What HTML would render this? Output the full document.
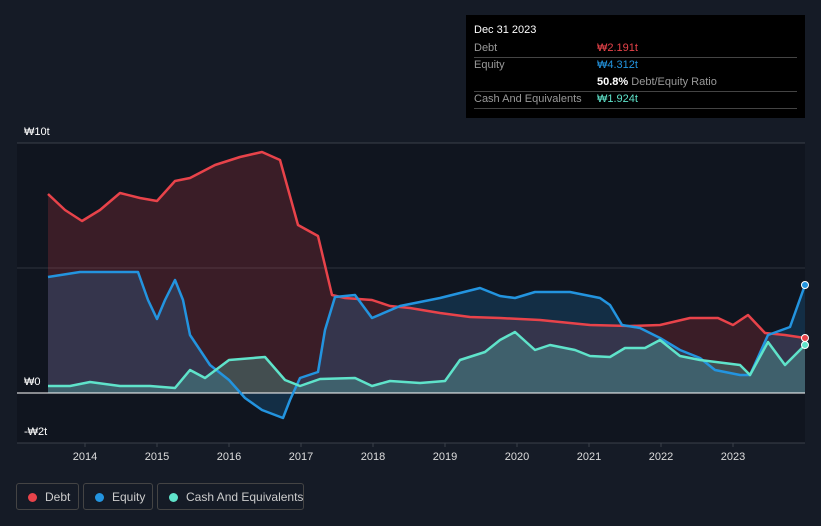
<!DOCTYPE html><html><head><style>
body{margin:0;background:#151b26;font-family:"Liberation Sans",sans-serif;}
.wrap{position:relative;width:821px;height:526px;overflow:hidden;background:#151b26}
.tt{position:absolute;left:466px;top:15px;width:339px;height:103px;background:#000;color:#fff;font-size:11px}
.tt .r{position:absolute;left:8px;right:8px;border-bottom:1px solid #444;height:17px;line-height:17px}
.lab{color:#999}
.leg{position:absolute;top:483px;height:27px;border:1px solid #444;border-radius:3px;color:#ccc;font-size:12px;line-height:27px;box-sizing:border-box;white-space:nowrap}
.leg i{position:absolute;left:11px;top:9px;width:9px;height:9px;border-radius:50%}
</style></head><body><div class="wrap">
<svg width="821" height="526" style="position:absolute;left:0;top:0" font-family="Liberation Sans" >
<rect x="17" y="143" width="788" height="300" fill="#10151f"/>
<line x1="17" y1="143" x2="805" y2="143" stroke="#3a404a"/>
<line x1="17" y1="268" x2="805" y2="268" stroke="#2e343e"/>
<line x1="17" y1="443" x2="805" y2="443" stroke="#3a404a"/>
<path d="M48,194 L65,210 L82,221 L100,210 L120,193 L140,198 L157,201 L175,181 L190,178 L215,165 L240,157 L262,152 L280,160 L298,225 L318,236 L332,295 L345,298 L372,300 L390,306 L410,308 L440,313 L470,317 L500,318 L540,320 L590,325 L630,326 L660,325 L690,318 L718,318 L733,325 L748,315 L765,333 L785,335 L805,338 L805,393 L48,393Z" fill="#e8434a" fill-opacity="0.2"/>
<path d="M48,277 L80,272 L138,272 L148,300 L157,319 L165,300 L175,280 L183,300 L190,335 L210,365 L229,380 L245,398 L262,410 L283,418 L290,400 L300,378 L318,372 L325,330 L335,297 L355,295 L372,318 L400,306 L440,298 L480,288 L500,296 L515,298 L535,292 L570,292 L600,298 L610,305 L622,325 L640,328 L660,338 L680,350 L700,358 L715,370 L740,375 L750,375 L768,335 L790,327 L805,285 L805,393 L48,393Z" fill="#2394df" fill-opacity="0.2"/>
<path d="M48,386 L70,386 L90,382 L120,386 L150,386 L175,388 L190,370 L205,378 L229,360 L265,357 L285,380 L300,386 L320,379 L355,378 L372,386 L390,381 L420,383 L445,381 L460,360 L485,352 L500,340 L515,332 L535,350 L550,345 L575,350 L590,356 L610,357 L625,348 L645,348 L660,340 L680,356 L700,360 L740,365 L750,375 L768,342 L785,365 L805,345 L805,393 L48,393Z" fill="#5fe3ca" fill-opacity="0.25"/>
<line x1="17" y1="393" x2="805" y2="393" stroke="#fff"/>
<g fill="none" stroke-width="2.5" stroke-linejoin="round">
<polyline stroke="#e8434a" points="48,194 65,210 82,221 100,210 120,193 140,198 157,201 175,181 190,178 215,165 240,157 262,152 280,160 298,225 318,236 332,295 345,298 372,300 390,306 410,308 440,313 470,317 500,318 540,320 590,325 630,326 660,325 690,318 718,318 733,325 748,315 765,333 785,335 805,338"/>
<polyline stroke="#2394df" points="48,277 80,272 138,272 148,300 157,319 165,300 175,280 183,300 190,335 210,365 229,380 245,398 262,410 283,418 290,400 300,378 318,372 325,330 335,297 355,295 372,318 400,306 440,298 480,288 500,296 515,298 535,292 570,292 600,298 610,305 622,325 640,328 660,338 680,350 700,358 715,370 740,375 750,375 768,335 790,327 805,285"/>
<polyline stroke="#5fe3ca" points="48,386 70,386 90,382 120,386 150,386 175,388 190,370 205,378 229,360 265,357 285,380 300,386 320,379 355,378 372,386 390,381 420,383 445,381 460,360 485,352 500,340 515,332 535,350 550,345 575,350 590,356 610,357 625,348 645,348 660,340 680,356 700,360 740,365 750,375 768,342 785,365 805,345"/>
</g>
<circle cx="805" cy="285" r="3.5" fill="#2394df" stroke="#fff"/>
<circle cx="805" cy="338" r="3.5" fill="#e8434a" stroke="#fff"/>
<circle cx="805" cy="345" r="3.5" fill="#5fe3ca" stroke="#fff"/>
<g fill="#fff" font-size="11">
<text x="24" y="135">₩10t</text><text x="24" y="385">₩0</text><text x="24" y="435">-₩2t</text>
</g>
<g fill="#ddd" font-size="11" text-anchor="middle">
<text x="85" y="460">2014</text><text x="157" y="460">2015</text><text x="229" y="460">2016</text><text x="301" y="460">2017</text><text x="373" y="460">2018</text><text x="445" y="460">2019</text><text x="517" y="460">2020</text><text x="589" y="460">2021</text><text x="661" y="460">2022</text><text x="733" y="460">2023</text>
</g>
<g stroke="#3a404a"><line x1="85" y1="443" x2="85" y2="447"/><line x1="157" y1="443" x2="157" y2="447"/><line x1="229" y1="443" x2="229" y2="447"/><line x1="301" y1="443" x2="301" y2="447"/><line x1="373" y1="443" x2="373" y2="447"/><line x1="445" y1="443" x2="445" y2="447"/><line x1="517" y1="443" x2="517" y2="447"/><line x1="589" y1="443" x2="589" y2="447"/><line x1="661" y1="443" x2="661" y2="447"/><line x1="733" y1="443" x2="733" y2="447"/></g>
</svg>
<div class="tt">
<div style="position:absolute;left:8px;top:9px">Dec 31 2023</div>
<div class="r" style="top:25px"><span class="lab">Debt</span><span style="position:absolute;left:123px;color:#e8434a">₩2.191t</span></div>
<div class="r" style="top:42px;border:none"><span class="lab">Equity</span><span style="position:absolute;left:123px;color:#2394df">₩4.312t</span></div>
<div class="r" style="top:59px"><span style="position:absolute;left:123px"><b>50.8%</b> <span class="lab">Debt/Equity Ratio</span></span></div>
<div class="r" style="top:76px"><span class="lab">Cash And Equivalents</span><span style="position:absolute;left:123px;color:#5fe3ca">₩1.924t</span></div>
</div>
<div class="leg" style="left:16px;width:63px"><i style="background:#e8434a"></i><span style="position:absolute;left:28px">Debt</span></div>
<div class="leg" style="left:83px;width:70px"><i style="background:#2394df"></i><span style="position:absolute;left:28px">Equity</span></div>
<div class="leg" style="left:157px;width:147px"><i style="background:#5fe3ca"></i><span style="position:absolute;left:28px">Cash And Equivalents</span></div>
</div></body></html>
